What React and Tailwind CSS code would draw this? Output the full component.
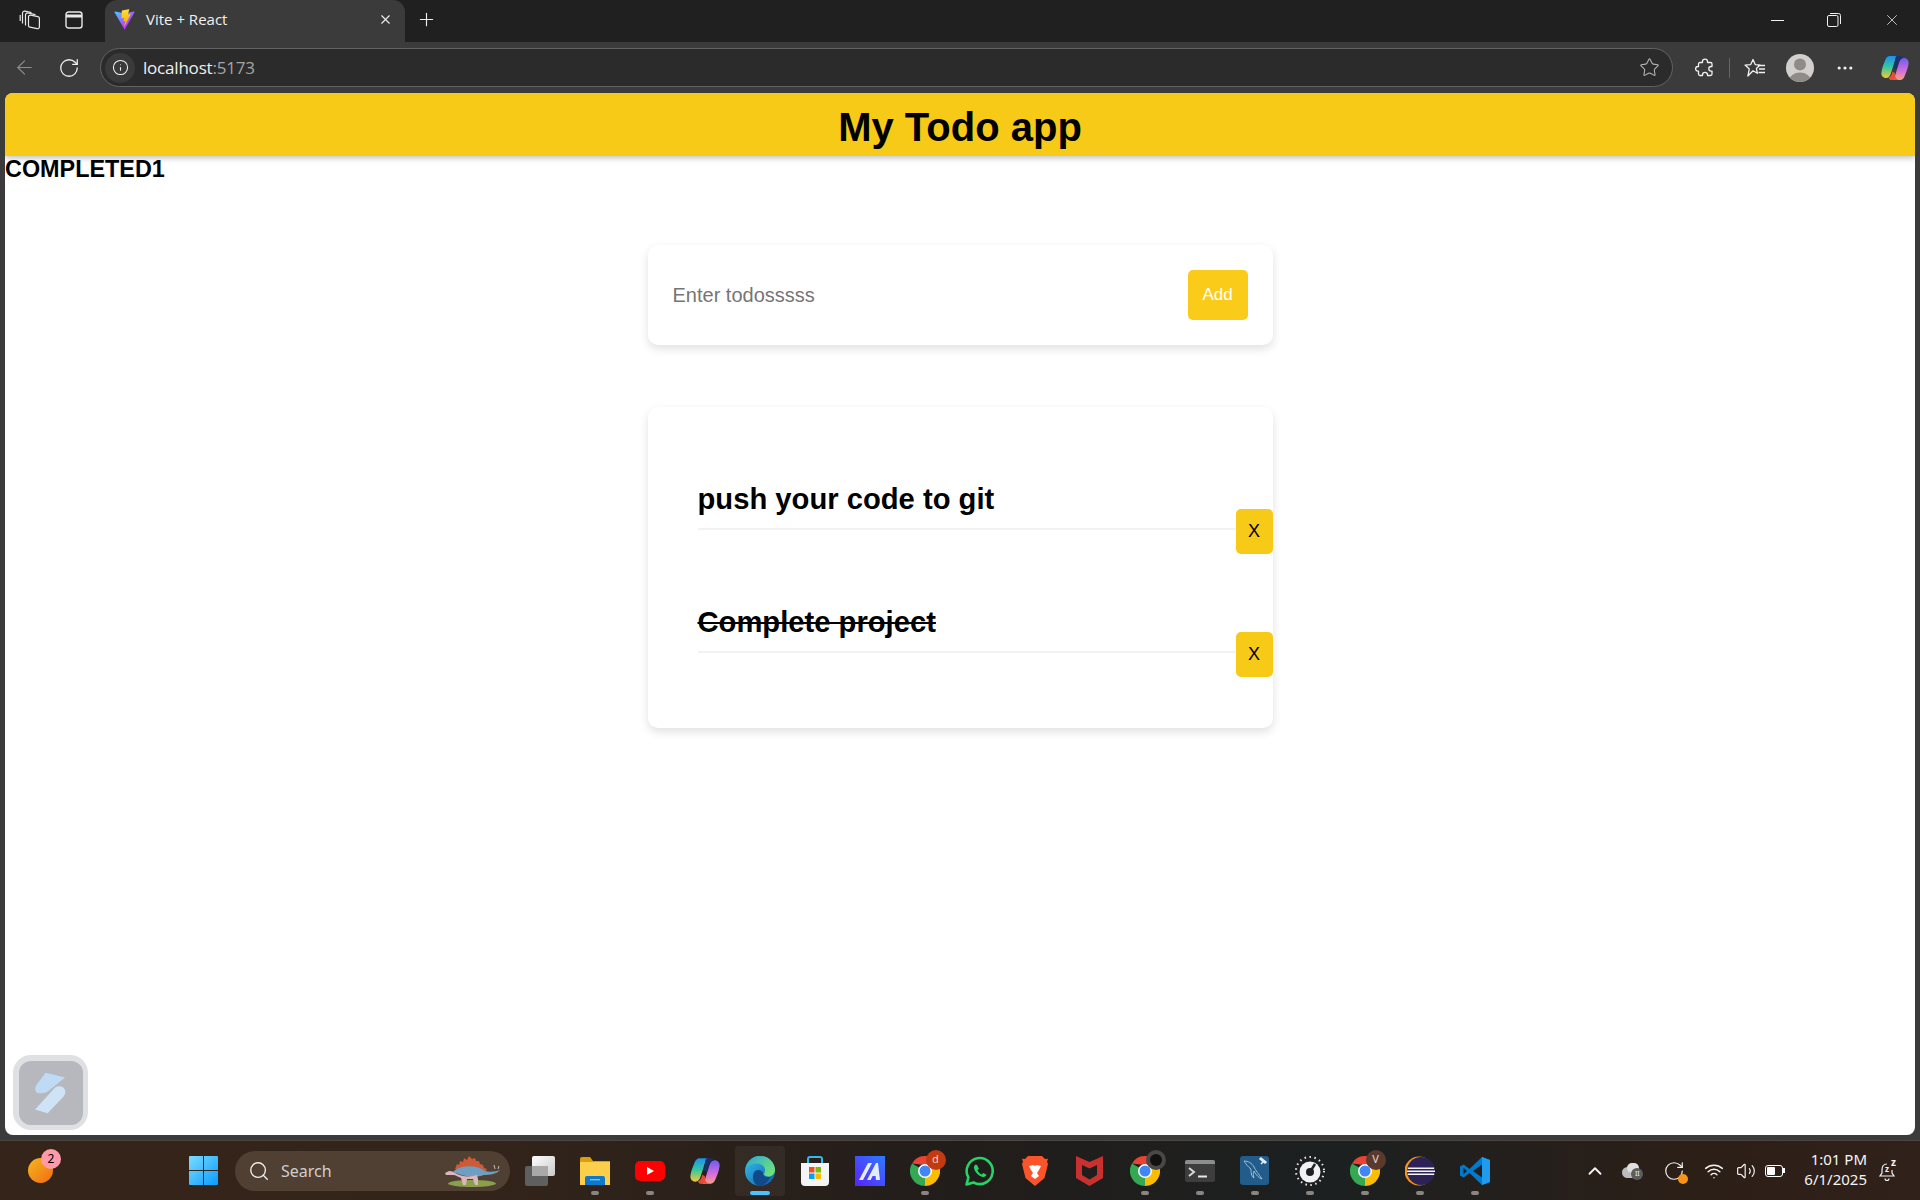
import {
  ArrowLeft,
  ChevronUp,
  Info,
  MoreHorizontal,
  Plus,
  RotateCw,
  Search,
  Star,
  Volume2,
  Wifi,
  X,
} from "lucide-react";

const todos = [
  { id: 1, text: "push your code to git", done: false },
  { id: 2, text: "Complete project", done: true },
];

function ViteIcon() {
  return (
    <svg width="21" height="21" viewBox="0 0 410 404">
      <defs>
        <linearGradient id="viteA" x1="6" y1="33" x2="235" y2="344" gradientUnits="userSpaceOnUse">
          <stop stopColor="#41D1FF" />
          <stop offset="1" stopColor="#BD34FE" />
        </linearGradient>
        <linearGradient id="viteB" x1="194" y1="8" x2="236" y2="292" gradientUnits="userSpaceOnUse">
          <stop stopColor="#FFEA83" />
          <stop offset="0.08" stopColor="#FFDD35" />
          <stop offset="1" stopColor="#FFA800" />
        </linearGradient>
      </defs>
      <path fill="url(#viteA)" d="M399.641 59.525 215.643 388.545c-3.799 6.793-13.559 6.833-17.415.073L10.582 59.556C6.38 52.19 12.68 43.266 21.028 44.76l184.195 32.923c1.175.21 2.378.208 3.553-.006l180.343-32.87c8.32-1.517 14.649 7.337 10.522 14.719Z" />
      <path fill="url(#viteB)" d="M292.965 1.574 156.801 28.255a5 5 0 0 0-4.03 4.611l-8.376 141.464c-.197 3.332 2.863 5.918 6.115 5.168l37.91-8.749c3.547-.818 6.752 2.306 6.023 5.873l-11.263 55.153c-.758 3.712 2.727 6.886 6.352 5.785l23.415-7.114c3.63-1.102 7.118 2.081 6.35 5.796l-17.899 86.633c-1.12 5.419 6.088 8.374 9.094 3.728l2.008-3.103 110.954-221.428c1.858-3.707-1.346-7.935-5.418-7.15l-39.022 7.532c-3.667.707-6.787-2.708-5.752-6.296l25.469-88.291c1.036-3.594-2.095-7.012-5.766-6.293Z" />
    </svg>
  );
}

function WorkspacesIcon() {
  return (
    <svg width="22" height="20" viewBox="0 0 22 20" fill="none" stroke="#e8e8e8" strokeWidth="1.2" strokeLinejoin="round">
      <path d="M9.500 6.800a1.800 1.800 0 0 1 2.200-1.700l7.200 1.500a1.800 1.800 0 0 1 1.500 1.800v8.600a1.800 1.800 0 0 1-2.200 1.700l-7.200-1.500a1.800 1.800 0 0 1-1.500-1.800z" />
      <path d="M6.500 15.500V5a2 2 0 0 1 2.400-2l7.600 1.600" />
      <path d="M3.500 13.500V3.200a2 2 0 0 1 2.400-2l6.600 1.400" />
      <path d="M1.200 11V5" />
    </svg>
  );
}

function TabsIcon() {
  return (
    <svg width="18" height="18" viewBox="0 0 18 18" fill="none" stroke="#e8e8e8" strokeWidth="1.4">
      <rect x="1" y="1" width="16" height="16" rx="2.5" />
      <path d="M1 5h16" strokeWidth="3" />
    </svg>
  );
}

function RestoreIcon() {
  return (
    <svg width="14" height="14" viewBox="0 0 14 14" fill="none" stroke="#f0f0f0" strokeWidth="1">
      <rect x="0.5" y="2.5" width="10.5" height="11" rx="1.5" />
      <path d="M3 0.5h8.5a2 2 0 0 1 2 2V11" />
    </svg>
  );
}

function ExtensionIcon() {
  return (
    <svg width="20" height="20" viewBox="0 0 20 20" fill="none" stroke="#f0f0f0" strokeWidth="1.3" strokeLinejoin="round">
      <path d="M7.500 4.500V3.600a2.500 2.500 0 0 1 5 0v.9h3a1.500 1.500 0 0 1 1.500 1.500v2.500h-.9a2.300 2.300 0 0 0 0 4.600h.9V16a1.500 1.500 0 0 1-1.500 1.500h-3v-.6a2.500 2.500 0 0 0-5 0v.6H5A1.500 1.500 0 0 1 3.500 16v-2.900h-.6a2.300 2.300 0 0 1 0-4.600h.6V6A1.500 1.500 0 0 1 5 4.500z" />
    </svg>
  );
}

function FavoritesIcon() {
  return (
    <svg width="22" height="20" viewBox="0 0 22 20" fill="none" stroke="#f0f0f0" strokeWidth="1.3" strokeLinejoin="round">
      <path d="M9 1.500 11.200 6.600 16 7.100 12.400 10.400 13.400 15.300 9 12.800 3.900 18 5.300 10.900 1 7.100 6.700 6.600z" />
      <path d="M14 7.500h7M15 11h6M14.500 14.500h6.500" />
    </svg>
  );
}

function ProfileIcon() {
  return (
    <svg width="28" height="28" viewBox="0 0 28 28">
      <defs>
        <clipPath id="profileClip">
          <circle cx="14" cy="14" r="14" />
        </clipPath>
      </defs>
      <circle cx="14" cy="14" r="14" fill="#d2d0cd" />
      <g clipPath="url(#profileClip)" fill="#8f8c88">
        <circle cx="14" cy="10.500" r="6" />
        <ellipse cx="14" cy="27" rx="11" ry="8.500" />
      </g>
    </svg>
  );
}

function CopilotIcon({ size = 28 }) {
  return (
    <svg width={size} height={size} viewBox="0 0 28 28">
      <defs>
        <linearGradient id="copilotA" x1="0" y1="0" x2="0" y2="1">
          <stop offset="0" stopColor="#1f8ff0" />
          <stop offset="0.5" stopColor="#35c8a0" />
          <stop offset="1" stopColor="#f7c832" />
        </linearGradient>
        <linearGradient id="copilotB" x1="0" y1="0" x2="0" y2="1">
          <stop offset="0" stopColor="#6f5cf0" />
          <stop offset="0.6" stopColor="#d66fdc" />
          <stop offset="1" stopColor="#f7a27c" />
        </linearGradient>
      </defs>
      <path fill="url(#copilotA)" d="M9 2h9c-2 0-3.200 1.500-3.800 3.500L10 19c-.9 3-2.500 5-5 5-3 0-5-2.500-4.600-5.500C.9 14 2.800 10 4.300 6 5.200 3.600 6.800 2 9 2z" />
      <path fill="url(#copilotB)" d="M19 26h-9c2 0 3.200-1.500 3.800-3.500L18 9c.9-3 2.500-5 5-5 3 0 5 2.500 4.600 5.500-.5 4.500-2.400 8.500-3.900 12.500-.9 2.400-2.500 4-4.700 4z" />
      <path fill="#17307d" d="M15 2h4c1.500 0 2.600.8 3 2-2 .2-3.300 1.500-4 3.500L15.500 15l-2.800-1.500 1.500-8C14.500 4 14.500 3 15 2z" opacity="0.85" />
      <path fill="#ee4f3a" d="M7.500 23.500C10 23 11 20 11.500 17.500L14 19c-.4 3 .5 5.500 3.500 7H10c-1.200 0-2-1-2.500-2.500z" opacity="0.95" />
    </svg>
  );
}

function TaskViewIcon() {
  return (
    <svg width="30" height="30" viewBox="0 0 30 30">
      <defs>
        <linearGradient id="taskFront" x1="0" y1="0" x2="1" y2="1">
          <stop offset="0" stopColor="#ffffff" />
          <stop offset="1" stopColor="#c9c9c9" />
        </linearGradient>
      </defs>
      <rect x="0" y="10" width="23" height="20" rx="2" fill="#5f5f5f" />
      <rect x="7" y="0" width="23" height="20" rx="2" fill="url(#taskFront)" />
      <rect x="7" y="10" width="16" height="10" fill="#a9a9a9" />
    </svg>
  );
}

function FolderIcon() {
  return (
    <svg width="30" height="28" viewBox="0 0 30 28">
      <path fill="#dc9f0c" d="M0 2a2 2 0 0 1 2-2h8l3 4h17v6H0z" />
      <path fill="#fbcf4a" d="M0 5h30v23H0z" />
      <path fill="#0f78c8" d="M5 21a2 2 0 0 1 2-2h16a2 2 0 0 1 2 2v7H5z" />
      <path fill="#6cc4f5" d="M10 22h10v1.400H10z" />
    </svg>
  );
}

function YoutubeIcon() {
  return (
    <svg width="30" height="20" viewBox="0 0 30 20">
      <rect width="30" height="20" rx="5" fill="#f00" />
      <path d="M12 6v8l7-4z" fill="#fff" />
    </svg>
  );
}

function EdgeIcon() {
  return (
    <svg width="30" height="30" viewBox="0 0 30 30">
      <defs>
        <linearGradient id="edgeA" x1="0" y1="0" x2="1" y2="1">
          <stop offset="0" stopColor="#35c1f1" />
          <stop offset="1" stopColor="#0c59a4" />
        </linearGradient>
        <linearGradient id="edgeB" x1="0" y1="0" x2="1" y2="0.6">
          <stop offset="0" stopColor="#2ba5dc" />
          <stop offset="1" stopColor="#6ee07a" />
        </linearGradient>
      </defs>
      <circle cx="15" cy="15" r="15" fill="url(#edgeA)" />
      <path fill="url(#edgeB)" d="M15 0c8.500 0 15 6.500 15 14 0 4-3 6.500-6.500 6.500-2.500 0-4.500-1-4.500-2.500 0-.8 1-1.500 1-3.500 0-4-3.500-7-8-7C7 7.500 2.500 10 .6 13 1.800 5.500 7.500 0 15 0z" />
      <path fill="#114a8b" d="M13 14c3 0 5 1.500 5 3.500 0 2.500 3 4.500 7.500 3.500C23 26 19 30 15 30c-4 0-7-4-7-9 0-4 2-7 5-7z" />
    </svg>
  );
}

function StoreIcon() {
  return (
    <svg width="30" height="30" viewBox="0 0 30 30">
      <path d="M8 7V3a2 2 0 0 1 2-2h10a2 2 0 0 1 2 2v4" fill="none" stroke="#35b8ee" strokeWidth="2" />
      <path d="M1 7h28v19a4 4 0 0 1-4 4H5a4 4 0 0 1-4-4z" fill="#f4f4f4" />
      <rect x="9" y="11" width="5.500" height="5.500" fill="#f25022" />
      <rect x="15.500" y="11" width="5.500" height="5.500" fill="#7fba00" />
      <rect x="9" y="17.500" width="5.500" height="5.500" fill="#00a4ef" />
      <rect x="15.500" y="17.500" width="5.500" height="5.500" fill="#ffb900" />
    </svg>
  );
}

function MailAppIcon() {
  return (
    <svg width="30" height="30" viewBox="0 0 30 30">
      <defs>
        <linearGradient id="appA" x1="1" y1="0" x2="0" y2="1">
          <stop offset="0" stopColor="#2d7bff" />
          <stop offset="1" stopColor="#5a22ff" />
        </linearGradient>
      </defs>
      <rect width="30" height="30" fill="url(#appA)" />
      <path d="M4 24 13 7h4L8 24zM12 24l9-17h2l2 17h-4l-.4-4h-3l-2 4z" fill="#e6ecff" />
    </svg>
  );
}

function ChromeIcon() {
  return (
    <svg width="30" height="30" viewBox="0 0 30 30">
      <path fill="#ea4335" d="M2 7.500A15 15 0 0 1 28 7.500L15 9z" />
      <path fill="#fbbc04" d="M28 7.500A15 15 0 0 1 15 30L15 15z" />
      <path fill="#34a853" d="M15 30A15 15 0 0 1 2 7.500L15 15z" />
      <circle cx="15" cy="15" r="7" fill="#fff" />
      <circle cx="15" cy="15" r="5.500" fill="#4285f4" />
    </svg>
  );
}

function WhatsappIcon() {
  return (
    <svg width="30" height="30" viewBox="0 0 30 30" fill="none">
      <path d="M1.500 28.500 3.400 21.500A13 13 0 1 1 8.500 26.500z" stroke="#25d366" strokeWidth="2.600" strokeLinejoin="round" />
      <path d="M10.800 8.500c-1 .5-2 1.800-1.800 3.500.4 3.500 4.600 8.200 8.800 9 1.800.3 3.300-.8 3.700-2.200l-3.200-1.800-1.500 1.500c-1.800-.6-3.700-2.500-4.300-4.300l1.400-1.400-1.700-3.500z" fill="#25d366" />
    </svg>
  );
}

function BraveIcon() {
  return (
    <svg width="26" height="30" viewBox="0 0 26 30">
      <path fill="#fb542b" d="M6 0h14l3 3 3-.3-1 3 1 2.300-3.500 14L13 30 3.500 22 0 8l1-2.300-1-3L3 3z" />
      <path fill="#fff" d="M7 10l4-1 2 1 2-1 4 1-2 4-2 3 2 3-4 3-4-3 2-3-2-3z" />
    </svg>
  );
}

function McafeeIcon() {
  return (
    <svg width="27" height="30" viewBox="0 0 27 30">
      <path fill="#c8312e" d="M0 0 13.500 6 27 0v22L13.500 30 0 22zM6 9v10l7.500 4.500L21 19V9l-7.500 3.500z" fillRule="evenodd" />
    </svg>
  );
}

function TerminalIcon() {
  return (
    <svg width="30" height="22" viewBox="0 0 30 22">
      <rect width="30" height="22" rx="2" fill="#3d3d3d" />
      <path d="M0 2a2 2 0 0 1 2-2h26a2 2 0 0 1 2 2v2H0z" fill="#8d8d8d" />
      <path d="M4 8l5 4-5 4" fill="none" stroke="#d8d8d8" strokeWidth="2" />
      <path d="M13 16.500h9" stroke="#e8e8e8" strokeWidth="2" />
    </svg>
  );
}

function MysqlIcon() {
  return (
    <svg width="29" height="29" viewBox="0 0 29 29">
      <rect width="29" height="29" rx="3" fill="#225c8a" />
      <path d="M4 5c4 0 8 2 10 6 2 4 4 6 8 12-3-1-6-4-8-8-1 2-1 4 0 7-3-2-3-6-3-9C8 11 6 8 4 5z" fill="none" stroke="#a8c8e0" strokeWidth="0.9" />
      <path d="M21 2l5 4-1 1-5-4zM23 6l-2 2" stroke="#e8f0f6" strokeWidth="1.500" fill="none" />
    </svg>
  );
}

function GaugeIcon() {
  return (
    <svg width="30" height="30" viewBox="0 0 30 30">
      <circle cx="15" cy="15" r="14" fill="none" stroke="#e8e8e8" strokeWidth="2" strokeDasharray="1.500 3.500" />
      <circle cx="15" cy="16" r="10.500" fill="#f2f2f2" />
      <circle cx="15" cy="16" r="4" fill="#1e2222" />
      <path d="M15 16 20 8" stroke="#1e2222" strokeWidth="2.500" />
    </svg>
  );
}

function EclipseIcon() {
  return (
    <svg width="30" height="30" viewBox="0 0 30 30">
      <circle cx="14" cy="15" r="14.500" fill="#f7941e" />
      <circle cx="16" cy="15" r="14" fill="#2c2255" />
      <path d="M2.800 11.500h26.400v1.500H2.800zM2 14.500h28V16H2zM2.800 17.500h26.400V19H2.800z" fill="#f4f4f4" />
    </svg>
  );
}

function VscodeIcon() {
  return (
    <svg width="30" height="30" viewBox="0 0 30 30">
      <path fill="#007acc" d="M22 1 9.500 13 3.500 8.500 0 10.500v9l3.500 2 6-4.500L22 29l8-3V4zM22 8.500v13L13 15zM3.500 11.800 7 15l-3.500 3.200z" fillRule="evenodd" />
      <path fill="#1f9cf0" d="M22 1l8 3v22l-8 3z" />
    </svg>
  );
}

function Stegosaurus() {
  return (
    <svg width="56" height="32" viewBox="0 0 56 32">
      <ellipse cx="27" cy="28.500" rx="24" ry="3.500" fill="#8aa04a" />
      <path fill="#cf5a36" d="M10 14 12 9l2 1 1-4 3 1 1-4 3 2 2-4 3 3 3-1 1 3 3 0 1 3 3 1 1 3 3 1-1 2-12-2-10 1z" />
      <path fill="#6f9ec4" d="M8 17c6-7 24-8 32-1 4 1 10 1 15-1-3 4-10 5-16 5-8 3-20 2-31-3z" />
      <path fill="#d9b6c0" d="M0 18l4-2c3 0 5 1 8 3 6 3 14 3 20 1l1 4 0 6h-3l-2-6-6 0-1 6h-3l-2-7c-3-1-5-3-8-3H1z" />
      <path stroke="#e8dcd0" strokeWidth="0.800" d="M50 14l-1-4M53 14l1-3" />
    </svg>
  );
}

function AppBadge({ className, children }) {
  return (
    <span className={`absolute -top-[6px] -right-[6px] flex h-[20px] w-[20px] items-center justify-center rounded-full text-[11px] ${className}`}>
      {children}
    </span>
  );
}

function TaskItem({ running = true, active = false, children }) {
  return (
    <div className={`mx-[2.5px] flex h-[50px] w-[50px] flex-col items-center rounded ${active ? "bg-white/5" : ""}`}>
      <div className="relative mt-[10px] flex h-[30px] w-[30px] items-center justify-center">{children}</div>
      <div
        className={`mt-[5px] h-[4px] rounded-full ${
          active ? "w-[20px] bg-[#4cc2ff]" : running ? "w-[8px] bg-[#8a8580]" : "w-[8px]"
        }`}
      />
    </div>
  );
}

function BrowserTabs() {
  return (
    <div className="flex h-[42px] items-center bg-[#202020] text-[#f0f0f0]">
      <div className="mb-[3px] flex w-[105px] items-center">
        <div className="ml-[19px] flex w-[22px] justify-center">
          <WorkspacesIcon />
        </div>
        <div className="ml-[24px]">
          <TabsIcon />
        </div>
      </div>
      <div className="flex h-[42px] w-[300px] items-center rounded-t-[12px] bg-[#3b3b3b] pb-[3px] pl-[9px] pr-[12px]">
        <ViteIcon />
        <span className="ml-[11px] flex-1 text-[15px]">Vite + React</span>
        <X size={15} strokeWidth={1.8} />
      </div>
      <div className="mb-[3px] ml-[11px]">
        <Plus size={21} strokeWidth={1.3} />
      </div>
      <div className="ml-auto mb-[2px] flex items-center">
        <div className="flex w-[56px] justify-center">
          <div className="h-px w-[13px] bg-[#f0f0f0]" />
        </div>
        <div className="flex w-[58px] justify-center">
          <RestoreIcon />
        </div>
        <div className="flex w-[57px] justify-center">
          <X size={18} strokeWidth={1} />
        </div>
      </div>
    </div>
  );
}

function AddressBar() {
  return (
    <div className="flex h-[51px] items-center bg-[#3b3b3b] text-[#f0f0f0]">
      <div className="ml-[13px] w-[22px] text-[#8d8d8d]">
        <ArrowLeft size={23} strokeWidth={1.2} />
      </div>
      <div className="ml-[23px] w-[24px]">
        <RotateCw size={22} strokeWidth={1.4} />
      </div>
      <div className="ml-[18px] flex h-[39px] w-[1573px] items-center rounded-full border border-[#636363] bg-[#2b2b2b] pl-[4px] pr-[12px]">
        <div className="flex h-[30px] w-[30px] items-center justify-center rounded-full bg-[#3a3a3a]">
          <Info size={17} strokeWidth={1.5} />
        </div>
        <span className="ml-[8px] flex-1 text-[17px] tracking-[-0.2px]">
          localhost<span className="text-[#a5a5a5]">:5173</span>
        </span>
        <Star size={21} strokeWidth={1.2} className="text-[#b5b5b5]" />
      </div>
      <div className="ml-[22px] w-[22px]">
        <ExtensionIcon />
      </div>
      <div className="ml-[12px] h-[20px] w-px bg-[#666666]" />
      <div className="ml-[14px] w-[22px]">
        <FavoritesIcon />
      </div>
      <div className="ml-[20px]">
        <ProfileIcon />
      </div>
      <div className="ml-[19px] flex w-[24px] justify-center">
        <MoreHorizontal size={20} strokeWidth={1.8} />
      </div>
      <div className="ml-[24px]">
        <CopilotIcon />
      </div>
    </div>
  );
}

function TodoPage() {
  return (
    <div className="mx-[5px] flex h-[1042px] flex-col overflow-hidden rounded-lg bg-white font-['Liberation_Sans',Arial,sans-serif] text-black">
      <header className="flex h-[63px] shrink-0 items-center justify-center bg-[#f7ca18] pt-[5px] shadow-[0_2px_6px_rgba(0,0,0,0.25)]">
        <h1 className="text-[40px] font-bold leading-none">My Todo app</h1>
      </header>
      <div className="h-[27px] text-[23.4px] font-bold leading-[27px]">COMPLETED1</div>

      <div className="mx-auto mt-[62px] flex h-[100px] w-[625px] items-center rounded-[10px] bg-white pl-[25px] pr-[25px] shadow-[0_4px_10px_rgba(0,0,0,0.12)]">
        <input
          className="min-w-0 flex-1 text-[20px] text-black outline-none placeholder:text-[#757575]"
          placeholder="Enter todosssss"
        />
        <button className="h-[50px] w-[60px] rounded-[5px] bg-[#fbcb1a] text-[17px] text-white">Add</button>
      </div>

      <div className="mx-auto mt-[62px] flex w-[625px] flex-col gap-[51px] rounded-[10px] bg-white pb-[51px] pl-[50px] pt-[75px] shadow-[0_4px_10px_rgba(0,0,0,0.12)]">
        {todos.map((todo) => (
          <div key={todo.id} className="flex items-end">
            <div
              className={`mb-[24px] flex-1 border-b-2 border-[#f2f2f2] pb-[12px] text-[29.2px] font-bold leading-[34px] ${
                todo.done ? "line-through" : ""
              }`}
            >
              {todo.text}
            </div>
            <button className="h-[45px] w-[37px] rounded-[5px] bg-[#f7ca18] text-[18px] text-black">X</button>
          </div>
        ))}
      </div>

      <div className="mb-[5px] ml-[8px] mt-auto flex h-[75px] w-[75px] items-center justify-center rounded-[18px] bg-[#dfe0e4]">
        <div className="flex h-[64px] w-[64px] items-center justify-center rounded-[12px] bg-[#b7b8bd]">
          <svg width="31" height="42" viewBox="0 0 32 42">
            <path d="M11 0 31 5 15 18c-3 3-8 4-12 3-3-1-4-5-1-9z" fill="#bedaf5" />
            <path d="M21 15c4-2 9-1 10 3 1 3 0 5-2 7L13 42 0 38z" fill="#cfe3f7" />
          </svg>
        </div>
      </div>
    </div>
  );
}

function Taskbar() {
  return (
    <div className="mt-[5px] flex h-[60px] items-center border-t border-[#4a4540] bg-[linear-gradient(90deg,#35241a_0%,#33241a_25%,#211d1b_50%,#1c2020_70%,#2c1f18_88%,#30211a_100%)] font-['Noto_Sans',sans-serif]">
      <div className="w-[189px] pl-[28px]">
        <div className="relative h-[25px] w-[25px] rounded-full bg-[linear-gradient(135deg,#f5b81e,#f26a12)]">
          <span className="absolute -right-[8px] -top-[9px] flex h-[20px] w-[20px] items-center justify-center rounded-full bg-[#ff9aa8] text-[12px] text-black">
            2
          </span>
        </div>
      </div>
      <svg width="29" height="29" viewBox="0 0 29 29">
        <defs>
          <linearGradient id="startGrad" x1="0" y1="0" x2="1" y2="1">
            <stop offset="0" stopColor="#7adcff" />
            <stop offset="1" stopColor="#0a9bff" />
          </linearGradient>
        </defs>
        <path fill="url(#startGrad)" d="M0 1a1 1 0 0 1 1-1h13v14H0zM15 0h13a1 1 0 0 1 1 1v13H15zM0 15h14v14H1a1 1 0 0 1-1-1zM15 15h14v13a1 1 0 0 1-1 1H15z" />
      </svg>
      <div className="ml-[17px] flex h-[40px] w-[275px] items-center rounded-full bg-[#4f4033] pl-[13px] pr-[9px]">
        <Search size={22} strokeWidth={1.5} className="text-[#f0ece8]" />
        <span className="ml-[11px] flex-1 text-[16px] text-[#d3cec9]">Search</span>
        <Stegosaurus />
      </div>
      <div className="ml-[2px] flex items-center">
        <TaskItem running={false}>
          <TaskViewIcon />
        </TaskItem>
        <TaskItem>
          <FolderIcon />
        </TaskItem>
        <TaskItem>
          <YoutubeIcon />
        </TaskItem>
        <TaskItem running={false}>
          <CopilotIcon size={30} />
        </TaskItem>
        <TaskItem active>
          <EdgeIcon />
        </TaskItem>
        <TaskItem running={false}>
          <StoreIcon />
        </TaskItem>
        <TaskItem running={false}>
          <MailAppIcon />
        </TaskItem>
        <TaskItem>
          <ChromeIcon />
          <AppBadge className="bg-[#c13a12] text-[#f3c9b8]">d</AppBadge>
        </TaskItem>
        <TaskItem running={false}>
          <WhatsappIcon />
        </TaskItem>
        <TaskItem running={false}>
          <BraveIcon />
        </TaskItem>
        <TaskItem running={false}>
          <McafeeIcon />
        </TaskItem>
        <TaskItem>
          <ChromeIcon />
          <AppBadge className="bg-[#4a4744]">
            <span className="h-[12px] w-[12px] rounded-full bg-[#111111]" />
          </AppBadge>
        </TaskItem>
        <TaskItem>
          <TerminalIcon />
        </TaskItem>
        <TaskItem>
          <MysqlIcon />
        </TaskItem>
        <TaskItem>
          <GaugeIcon />
        </TaskItem>
        <TaskItem>
          <ChromeIcon />
          <AppBadge className="bg-[#5a3a2c] text-[#e8d8cc]">V</AppBadge>
        </TaskItem>
        <TaskItem>
          <EclipseIcon />
        </TaskItem>
        <TaskItem>
          <VscodeIcon />
        </TaskItem>
      </div>

      <div className="ml-auto flex items-center text-[#f5f5f5]">
        <ChevronUp size={22} strokeWidth={2} />
        <div className="relative ml-[16px] h-[16px] w-[18px]">
          <div className="absolute left-0 top-[4px] h-[11px] w-[15px] rounded-full bg-[#bdbdbd]" />
          <div className="absolute left-[5px] top-0 h-[10px] w-[12px] rounded-full bg-[#e0e0e0]" />
          <div className="absolute left-[9px] top-[5px] flex h-[12px] w-[12px] items-center justify-center rounded-full bg-[#5d5d5d] text-[7px] leading-none">
            II
          </div>
        </div>
        <div className="relative ml-[23px]">
          <RotateCw size={22} strokeWidth={1.3} />
          <div className="absolute -bottom-[2px] right-[-3px] h-[10px] w-[10px] rounded-full bg-[#f7931a]" />
        </div>
        <Wifi size={20} strokeWidth={1.8} className="ml-[19px]" />
        <Volume2 size={20} strokeWidth={1.4} className="ml-[12px]" />
        <div className="ml-[9px] flex items-center">
          <div className="flex h-[12px] w-[18px] items-center rounded-[3px] border border-white p-px">
            <div className="h-full w-[8px] rounded-[1px] bg-white" />
          </div>
          <div className="h-[5px] w-[2px] bg-white" />
        </div>
        <div className="mb-[3px] ml-[19px] flex flex-col items-end text-[15px] leading-[20px]">
          <span>1:01 PM</span>
          <span>6/1/2025</span>
        </div>
        <div className="relative ml-[11px] mr-[24px] h-[20px] w-[18px]">
          <svg width="18" height="20" viewBox="0 0 18 20" fill="none" stroke="#f5f5f5" strokeWidth="1.2">
            <path d="M9 3C5.500 3 4 6 4 9v3l-2 3h14l-2-3V9" />
            <path d="M7 17.500a2 2 0 0 0 4 0" />
          </svg>
          <span className="absolute right-0 -top-[4px] text-[10px] font-bold leading-none">z</span>
          <span className="absolute left-[7px] top-[4px] text-[8px] font-bold leading-none">z</span>
        </div>
      </div>
    </div>
  );
}

export default function App() {
  return (
    <div className="flex h-[1200px] w-[1920px] flex-col overflow-hidden bg-[#3b3b3b] font-['Open_Sans',sans-serif]">
      <BrowserTabs />
      <AddressBar />
      <TodoPage />
      <Taskbar />
    </div>
  );
}
